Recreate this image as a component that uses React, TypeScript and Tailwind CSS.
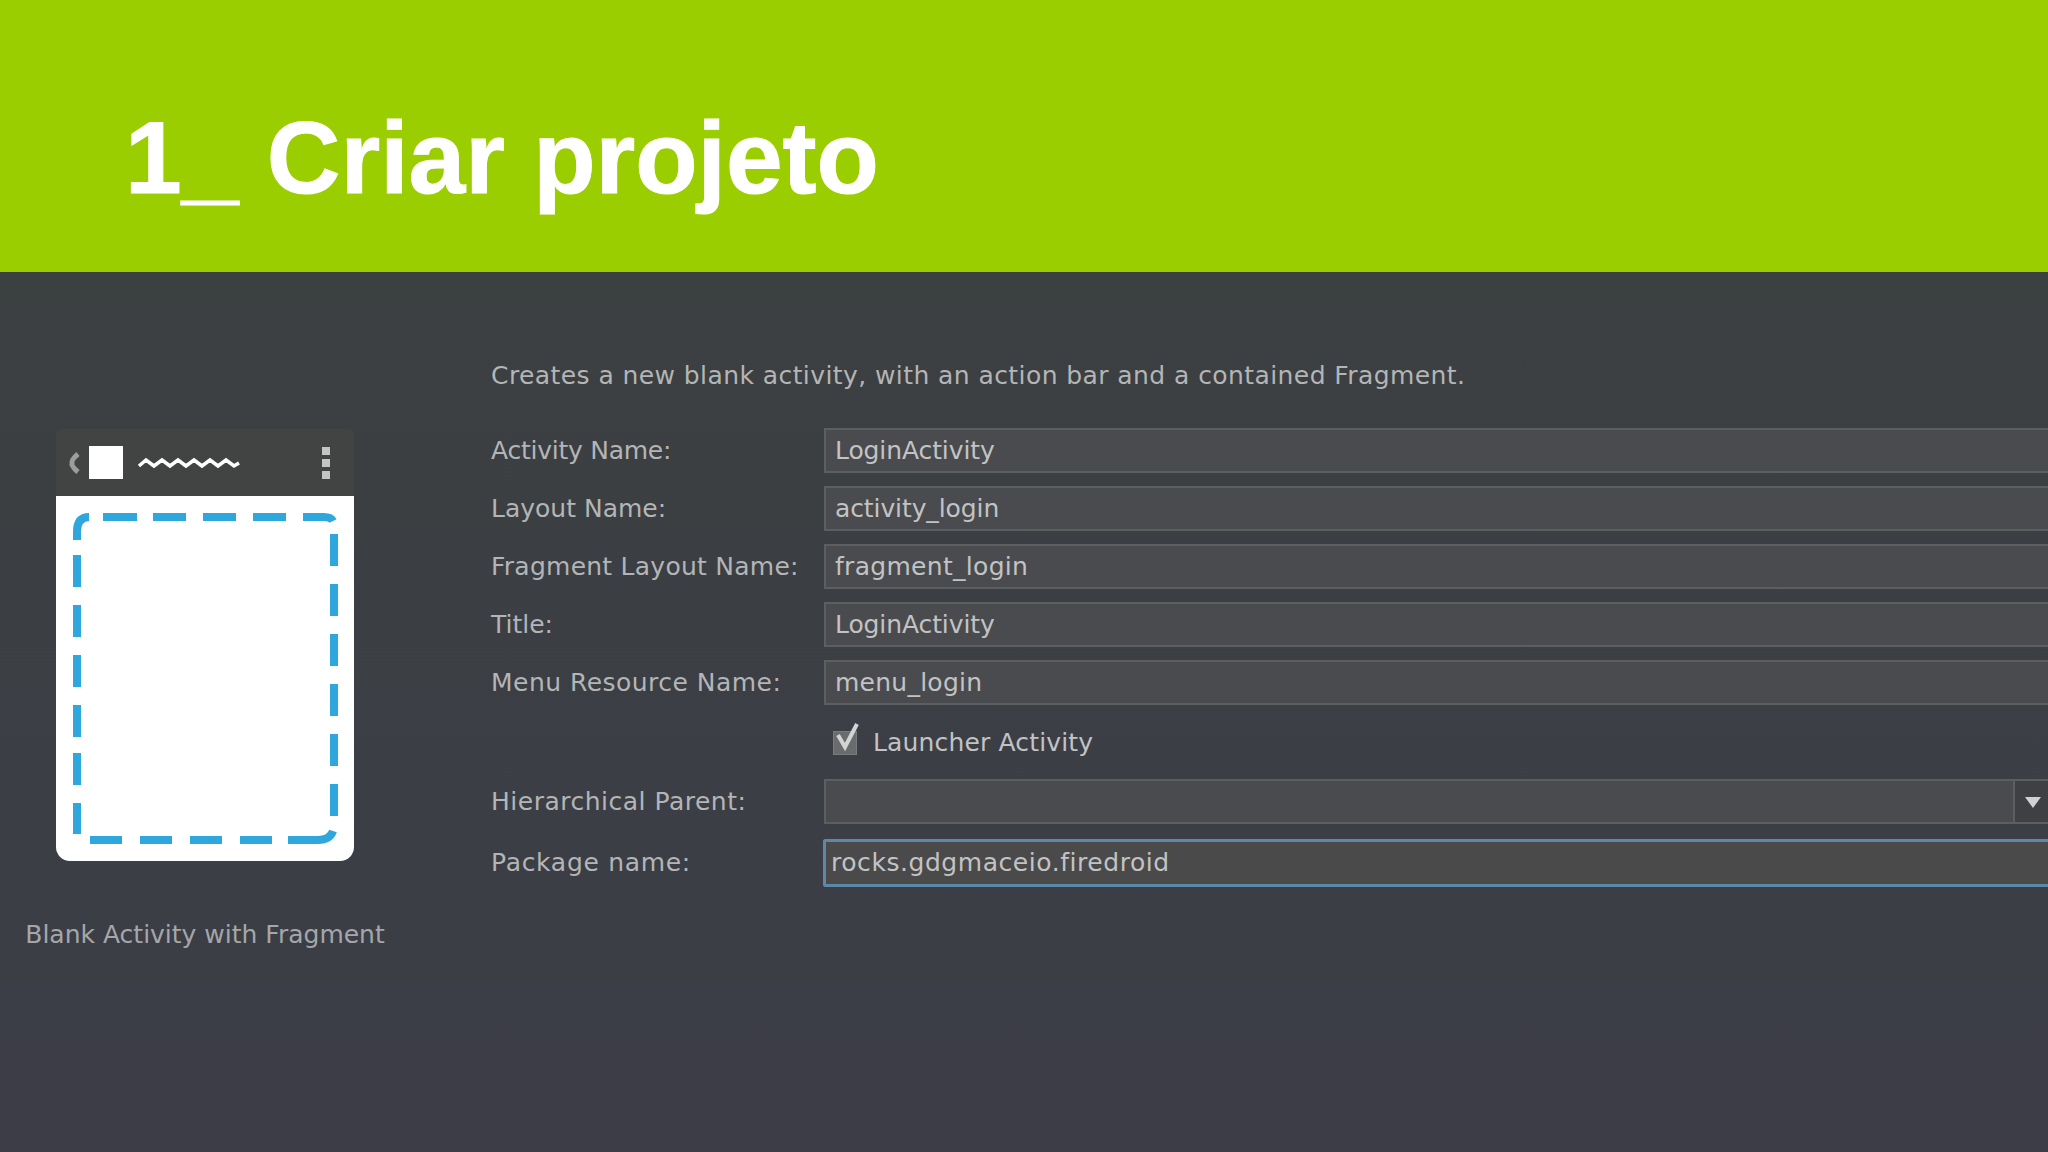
import React from 'react';

const fields = [
  { label: 'Activity Name:', value: 'LoginActivity', labelTrack: 'tracking-[-0.25px]', valueTrack: 'tracking-[-0.1px]' },
  { label: 'Layout Name:', value: 'activity_login', labelTrack: 'tracking-[0px]', valueTrack: 'tracking-[-0.1px]' },
  { label: 'Fragment Layout Name:', value: 'fragment_login', labelTrack: 'tracking-[0.25px]', valueTrack: 'tracking-[0.3px]' },
  { label: 'Title:', value: 'LoginActivity', labelTrack: 'tracking-[0px]', valueTrack: 'tracking-[-0.1px]' },
  { label: 'Menu Resource Name:', value: 'menu_login', labelTrack: 'tracking-[0.47px]', valueTrack: 'tracking-[0.25px]' },
];

// dashes read off the reference, in the white area's own coordinates
const dashes =
  'M21 44 L21 36 Q21 21 33 21 ' +
  'M47 21 L81 21 M97 21 L130 21 M147 21 L180 21 M197 21 L230 21 M247 21 L268 21 Q275 21 277 25 ' +
  'M278 38 L278 70 M278 88 L278 120 M278 138 L278 170 M278 188 L278 220 M278 238 L278 270 M278 288 L278 320 ' +
  'M277 335 Q274 344 262 344 L232 344 M216 344 L184 344 M166 344 L134 344 M116 344 L84 344 M66 344 L34 344 ' +
  'M21 338 L21 307 M21 289 L21 257 M21 241 L21 209 M21 191 L21 159 M21 141 L21 109 M21 91 L21 59';

function Preview() {
  return (
    <div className="w-[298px] h-[432px] flex flex-col rounded-b-[14px] overflow-hidden">
      <div className="h-[67px] bg-[#424343] rounded-t-[6px] flex items-center pl-[11px] pr-[24px]">
        <svg width="14" height="24" viewBox="0 0 14 24" className="opacity-60">
          <path d="M11 3 Q4 9 5 12 Q4 15 11 21" fill="none" stroke="#d8d8d8" strokeWidth="5" />
        </svg>
        <div className="w-[34px] h-[33px] bg-white ml-[8px]" />
        <svg width="104" height="14" viewBox="0 0 104 14" className="ml-[14px]">
          <path d="M2 10 L9 4 L17 10 L25 4 L33 10 L41 4 L49 10 L57 4 L65 10 L73 4 L81 10 L89 4 L97 10 L102 7" fill="none" stroke="#fff" strokeWidth="3.5" />
        </svg>
        <div className="ml-auto flex flex-col gap-[4px]">
          <div className="w-[8px] h-[8px] bg-[#c4c4c4]" />
          <div className="w-[8px] h-[8px] bg-[#c4c4c4]" />
          <div className="w-[8px] h-[8px] bg-[#c4c4c4]" />
        </div>
      </div>
      <div className="flex-1 bg-white">
        <svg width="298" height="365" viewBox="0 0 298 365">
          <path d={dashes} fill="none" stroke="#2ea8dc" strokeWidth="8" />
        </svg>
      </div>
    </div>
  );
}

export default function App() {
  const labelFont = "text-[#b3b5b6] text-[25px] [font-family:'DejaVu_Sans',sans-serif]";
  const valueFont = "text-[#c2c3c4] text-[25px] [font-family:'DejaVu_Sans',sans-serif]";

  return (
    <div className="w-[2048px] h-[1152px] overflow-hidden flex flex-col bg-[#3b4041]">
      <div className="h-[272px] shrink-0 bg-[#9bce00] pl-[125px] pt-[98px]">
        <h1 className="text-white font-bold text-[102px] leading-[120px] [-webkit-text-stroke:1px_white] [font-family:'Liberation_Sans',sans-serif]">
          1_ Criar projeto
        </h1>
      </div>

      <div className="flex-1 flex bg-gradient-to-b from-[#3b4041] to-[#3c3d47]">
        <div className="w-[491px] shrink-0 pt-[157px] pl-[56px]">
          <Preview />
          <div className="mt-[57px] -ml-[56px] w-[410px] text-center text-[#a4a7a9] text-[25px] leading-[34px] [font-family:'DejaVu_Sans',sans-serif]">
            Blank Activity with Fragment
          </div>
        </div>

        <div className="flex-1 min-w-0 pt-[87px]">
          <div className={`${labelFont} leading-[34px] tracking-[0.42px] whitespace-nowrap`}>
            Creates a new blank activity, with an action bar and a contained Fragment.
          </div>

          <div className="mt-[35px] flex flex-col gap-[13px]">
            {fields.map((f) => (
              <div key={f.label} className="flex items-center h-[45px]">
                <div className={`${labelFont} ${f.labelTrack} w-[333px] shrink-0 whitespace-nowrap`}>{f.label}</div>
                <div className={`${valueFont} ${f.valueTrack} flex-1 h-full flex items-center pl-[9px] bg-[#4a4b4e] border-y-2 border-l-2 border-[#5d5e60] whitespace-nowrap`}>
                  {f.value}
                </div>
              </div>
            ))}
          </div>

          <div className="flex items-center h-[44px] mt-[16px] pl-[342px]">
            <div className="relative w-[24px] h-[24px] bg-[#6a6b6d] border border-[#7a7b7d]">
              <svg width="30" height="32" viewBox="0 0 30 32" className="absolute -top-[11px] -left-[1px]">
                <path d="M5 14 L12 26 L24 3" fill="none" stroke="#d2d3d4" strokeWidth="4" />
              </svg>
            </div>
            <div className={`${valueFont} ml-[16px] tracking-[0.15px] whitespace-nowrap`}>Launcher Activity</div>
          </div>

          <div className="flex items-center h-[45px] mt-[14px]">
            <div className={`${labelFont} tracking-[0.5px] w-[333px] shrink-0 whitespace-nowrap`}>Hierarchical Parent:</div>
            <div className="flex-1 h-full flex bg-[#4a4b4e] border-y-2 border-l-2 border-[#5d5e60]">
              <div className="flex-1 border-r-2 border-[#5d5e60]" />
              <div className="w-[33px] bg-[#3f4043] flex items-center justify-center">
                <svg width="16" height="12" viewBox="0 0 16 12" className="ml-[2px]">
                  <path d="M0 1 L16 1 L8 12 Z" fill="#d0d1d2" />
                </svg>
              </div>
            </div>
          </div>

          <div className="flex items-center h-[48px] mt-[15px]">
            <div className={`${labelFont} tracking-[0.7px] w-[332px] shrink-0 whitespace-nowrap`}>Package name:</div>
            <div className={`${valueFont} tracking-[0.55px] flex-1 h-full flex items-center pl-[5px] bg-[#4b4a4a] border-y-[3px] border-l-[3px] border-[#5f87a8] rounded-l-[3px] whitespace-nowrap`}>
              rocks.gdgmaceio.firedroid
            </div>
          </div>
        </div>
      </div>
    </div>
  );
}
